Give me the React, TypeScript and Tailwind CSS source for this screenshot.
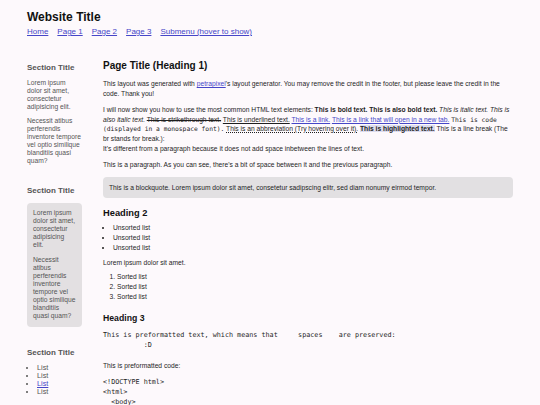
const link = 'text-[#4646c8] underline';

function SideTitle({ children, className = '' }: { children: React.ReactNode; className?: string }) {
  return <h2 className={`text-[8px] font-bold leading-[10px] text-[#555] ${className}`}>{children}</h2>;
}

export default function App() {
  return (
    <div className="min-h-screen bg-[#fdf9fc] font-['Liberation_Sans',Arial,sans-serif] text-[#1e1e1e]">
      <header className="px-[27px] pt-[10px]">
        <h1 className="text-[12px] font-bold leading-[14px] text-[#111]">Website Title</h1>
        <nav className="mt-[3px] flex gap-[9px] text-[8px] leading-[10px]">
          <a className={link}>Home</a>
          <a className={link}>Page 1</a>
          <a className={link}>Page 2</a>
          <a className={link}>Page 3</a>
          <a className={link}>Submenu (hover to show)</a>
        </nav>
      </header>

      <div className="mt-[23px] flex gap-[21px] px-[27px]">
        <aside className="w-[55px] shrink-0 pt-[3px] text-[6.7px] leading-[8px] text-[#555]">
          <SideTitle>Section Title</SideTitle>
          <p className="mt-[6px]">Lorem ipsum dolor sit amet, consectetur adipisicing elit.</p>
          <p className="mt-[6px]">Necessit atibus perferendis inventore tempore vel optio similique blanditiis quasi quam?</p>

          <SideTitle className="mt-[21px]">Section Title</SideTitle>
          <div className="mt-[7px] rounded-[4px] bg-[#e3e0e2] px-[6px] pt-[6px] pb-[7px]">
            <p>Lorem ipsum dolor sit amet, consectetur adipisicing elit.</p>
            <p className="mt-[7px]">Necessit atibus perferendis inventore tempore vel optio similique blanditiis quasi quam?</p>
          </div>

          <SideTitle className="mt-[21px]">Section Title</SideTitle>
          <ul className="mt-[6px] list-disc pl-[10px] text-[7.3px]">
            <li>List</li>
            <li>List</li>
            <li>
              <a className={link}>List</a>
            </li>
            <li>List</li>
          </ul>
        </aside>

        <main className="w-[410px] shrink-0 text-[6.7px] leading-[9.6px]">
          <h1 className="text-[10px] font-bold leading-[12px] text-[#111]">Page Title (Heading 1)</h1>
          <p className="mt-[7px]">
            This layout was generated with <a className={link}>petrapixel</a>'s layout generator. You may remove the
            credit in the footer, but please leave the credit in the code. Thank you!
          </p>
          <p className="mt-[7px]">
            I will now show you how to use the most common HTML text elements: <b>This is bold text.</b>{' '}
            <strong>This is also bold text.</strong> <i>This is italic text.</i> <em>This is also italic text.</em>{' '}
            <s>This is strikethrough text.</s> <u>This is underlined text.</u> <a className={link}>This is a link.</a>{' '}
            <a className={link}>This is a link that will open in a new tab.</a>{' '}
            <code className="font-['DejaVu_Sans_Mono',monospace] text-[6.3px]">
              This is code (displayed in a monospace font).
            </code>{' '}
            <abbr className="underline decoration-dotted">This is an abbreviation (Try hovering over it).</abbr>{' '}
            <mark className="bg-[#dcdcee] font-bold text-[#1e1e1e]">This is highlighted text.</mark> This is a line
            break (The br stands for break.):
            <br />
            It's different from a paragraph because it does not add space inbetween the lines of text.
          </p>
          <p className="mt-[7px]">
            This is a paragraph. As you can see, there's a bit of space between it and the previous paragraph.
          </p>
          <blockquote className="mt-[7px] rounded-[4px] bg-[#e2e0e2] px-[6px] py-[6px]">
            This is a blockquote. Lorem ipsum dolor sit amet, consetetur sadipscing elitr, sed diam nonumy eirmod
            tempor.
          </blockquote>

          <h2 className="mt-[10px] text-[9.3px] font-bold leading-[11px] text-[#111]">Heading 2</h2>
          <ul className="mt-[4px] list-disc pl-[10px] leading-[10px]">
            <li>Unsorted list</li>
            <li>Unsorted list</li>
            <li>Unsorted list</li>
          </ul>
          <p className="mt-[5px]">Lorem ipsum dolor sit amet.</p>
          <ol className="mt-[4px] list-decimal pl-[14px] leading-[10px]">
            <li>Sorted list</li>
            <li>Sorted list</li>
            <li>Sorted list</li>
          </ol>

          <h3 className="mt-[11px] text-[8.7px] font-bold leading-[10px] text-[#111]">Heading 3</h3>
          <pre className="mt-[7px] font-['DejaVu_Sans_Mono',monospace] text-[6.75px] leading-[10.3px]">
            {'This is preformatted text, which means that     spaces    are preserved:\n          :D'}
          </pre>
          <p className="mt-[10px]">This is preformatted code:</p>
          <pre className="mt-[7px] font-['DejaVu_Sans_Mono',monospace] text-[6.75px] leading-[10px]">
            {'<!DOCTYPE html>\n<html>\n  <body>\n    <p>Hello</p>\n  </body>\n</html>'}
          </pre>
        </main>
      </div>
    </div>
  );
}
